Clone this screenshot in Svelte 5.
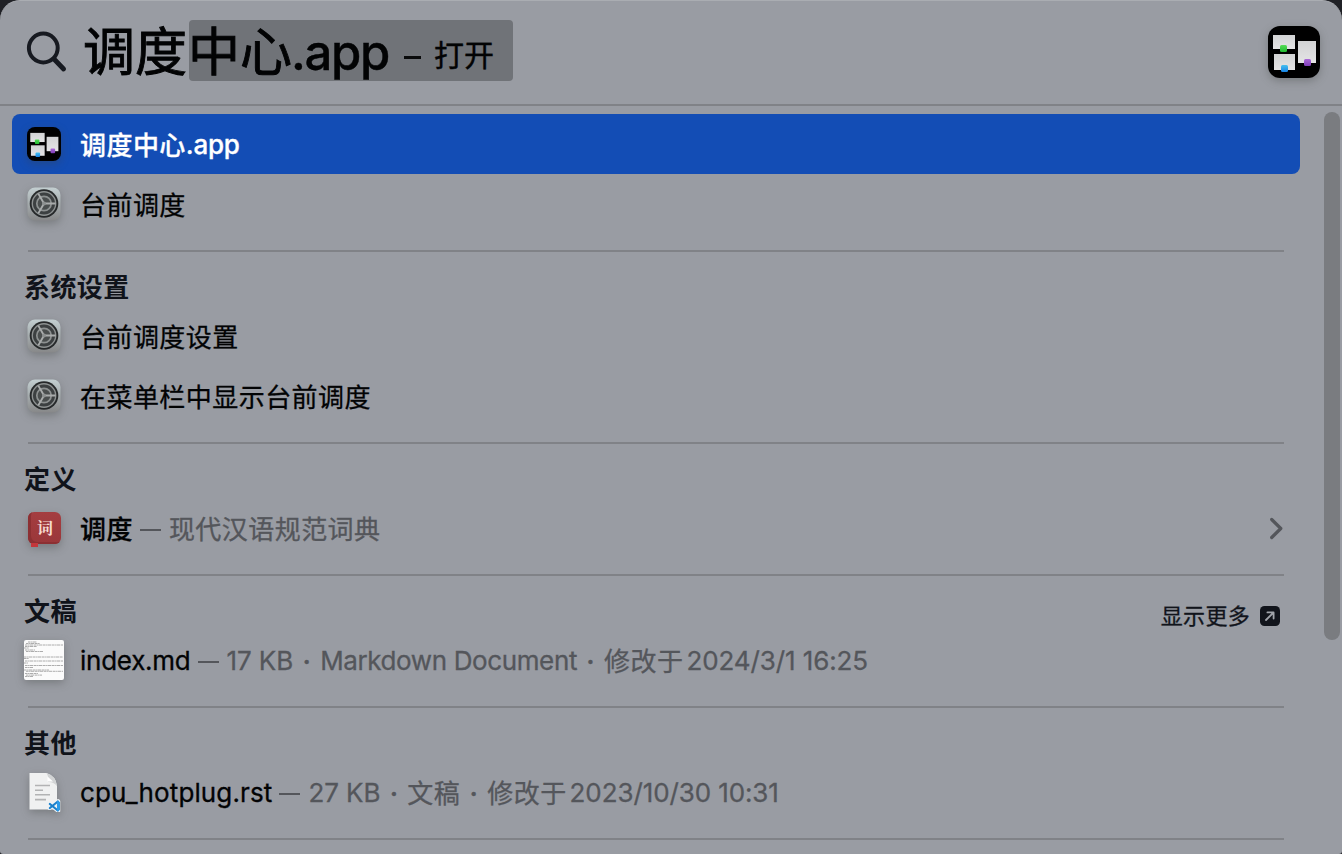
<script>
  const dot = ['·', 'dot'];
  const groups = [
    {
      rows: [
        { icon: 'mission', selected: true, name: [['调度中心', 'cjk'], ['.app', 'lat']] },
        { icon: 'gear', name: [['台前调度', 'cjk']] }
      ]
    },
    {
      title: '系统设置',
      rows: [
        { icon: 'gear', name: [['台前调度设置', 'cjk']] },
        { icon: 'gear', name: [['在菜单栏中显示台前调度', 'cjk']] }
      ]
    },
    {
      title: '定义',
      rows: [
        {
          icon: 'dict',
          strong: true,
          chevron: true,
          name: [['调度', 'cjk']],
          meta: [['现代汉语规范词典', 'cjk']]
        }
      ]
    },
    {
      title: '文稿',
      more: true,
      rows: [
        {
          icon: 'thumb',
          name: [['index.md', 'lat']],
          meta: [['17 KB', 'num'], dot, ['Markdown Document', 'tight'], dot, ['修改于', 'cjk'], ['2024/3/1 16:25', 'num date']]
        }
      ]
    },
    {
      title: '其他',
      rows: [
        {
          icon: 'doc',
          name: [['cpu_hotplug.rst', 'wide']],
          meta: [['27 KB', 'num'], dot, ['文稿', 'cjk'], dot, ['修改于', 'cjk'], ['2023/10/30 10:31', 'num date']]
        }
      ]
    }
  ];
  const thumbLines = [
    [4, 1.5, 9], [2, 3, 14], [1, 4.5, 38], [1, 6, 12], [0, 7.5, 5], [1, 9.5, 10], [2, 11, 17],
    [0, 16.5, 39], [0, 18, 5], [1, 20.5, 38], [0, 22.5, 4], [1, 25, 38], [1, 27, 8],
    [0, 29.5, 25], [2, 30.8, 37], [1, 33, 13], [2, 34.6, 16], [1, 36, 8]
  ];
</script>

{#snippet mission(size)}
  <svg class="shadow" width={size} height={size} viewBox="0 0 52 52">
    <defs>
      <linearGradient id="win" x1="0" y1="0" x2="0" y2="1">
        <stop offset="0" stop-color="#d2d3d4" /><stop offset="1" stop-color="#e4e4e5" />
      </linearGradient>
      <linearGradient id="grn" x1="0" y1="0" x2="0" y2="1">
        <stop offset="0" stop-color="#55dc55" /><stop offset="1" stop-color="#21bb31" />
      </linearGradient>
      <linearGradient id="blu" x1="0" y1="0" x2="0" y2="1">
        <stop offset="0" stop-color="#45bfee" /><stop offset="1" stop-color="#1784e6" />
      </linearGradient>
      <linearGradient id="pur" x1="0" y1="0" x2="0" y2="1">
        <stop offset="0" stop-color="#a968d6" /><stop offset="1" stop-color="#7e3db9" />
      </linearGradient>
    </defs>
    <rect width="52" height="52" rx="12" fill="#000" />
    <rect x="5" y="9" width="22" height="14" fill="url(#win)" />
    <rect x="6" y="28" width="21" height="16" fill="url(#win)" />
    <rect x="30" y="15" width="18" height="22" fill="url(#win)" />
    <rect x="12" y="19" width="7" height="7" rx="1.5" fill="url(#grn)" />
    <rect x="13" y="39" width="7" height="7" rx="1.5" fill="url(#blu)" />
    <rect x="36" y="33" width="7" height="7" rx="1.5" fill="url(#pur)" />
  </svg>
{/snippet}

{#snippet parts(list)}{#each list as [text, kind]}<span class={kind}>{text}</span>{/each}{/snippet}

<div class="panel">
  <header>
    <svg class="search" width="42" height="42" viewBox="0 0 42 42" fill="none" stroke="#171a21">
      <circle cx="17.3" cy="17" r="14.4" stroke-width="4" />
      <path d="M28 28 37.600 38" stroke-width="4.800" stroke-linecap="round" />
    </svg>
    <div class="query">
      <span class="typed">调度</span><span class="completion"><span class="rest">中心</span><span class="ext">.app</span><span class="dash"></span><span class="action">打开</span></span>
    </div>
    <div class="app">{@render mission(52)}</div>
  </header>

  <main>
    <div class="list">
      {#each groups as group}
        <section>
          {#if group.title}
            <div class="head">
              <h2>{group.title}</h2>
              {#if group.more}
                <div class="more">
                  <span>显示更多</span>
                  <svg width="20" height="20" viewBox="0 0 20 20" fill="none">
                    <rect width="20" height="20" rx="4.5" fill="#11141b" />
                    <path d="M6 14 13 7M7.400 6.400h6.200v6.200" stroke="#a0a3aa" stroke-width="1.800" stroke-linecap="round" stroke-linejoin="round" />
                  </svg>
                </div>
              {/if}
            </div>
          {/if}
          {#each group.rows as row}
            <div class="row" class:selected={row.selected}>
              <div class="icon">
                {#if row.icon === 'mission'}
                  {@render mission(34)}
                {:else if row.icon === 'gear'}
                  <svg class="shadow" width="34" height="34" viewBox="0 0 34 34" fill="none">
                    <defs>
                      <linearGradient id="plate" x1="0" y1="0" x2="0" y2="1">
                        <stop offset="0" stop-color="#c3cfd1" /><stop offset="1" stop-color="#878889" />
                      </linearGradient>
                    </defs>
                    <rect x=".5" y=".5" width="33" height="33" rx="7.5" fill="url(#plate)" />
                    <circle cx="17" cy="16.500" r="14.300" fill="#26292a" />
                    <circle cx="17" cy="16.500" r="11.700" fill="#3c4041" stroke="#8d9191" stroke-width="1.400" />
                    <circle cx="17" cy="16.500" r="7.200" fill="#4a4e4e" stroke="#8d9191" stroke-width="1.700" />
                    <path d="M17 16.500h11.500M17 16.500 11.300 6.600M17 16.500 11.300 26.400" stroke="#a9acac" stroke-width="1.900" />
                    <circle cx="17" cy="16.500" r="2" fill="#8d9191" />
                  </svg>
                {:else if row.icon === 'dict'}
                  <div class="dict"><span>词</span></div>
                {:else if row.icon === 'thumb'}
                  <svg class="shadow" width="40" height="40" viewBox="0 0 40 40">
                    <rect width="40" height="40" rx="2" fill="#fbfbfb" />
                    {#each thumbLines as [x, y, w]}
                      <path d="M{x} {y + 0.5}h{w}" stroke="#999" stroke-width=".8" stroke-dasharray="2.6 .5 1.4 .4 3.5 .6" />
                    {/each}
                  </svg>
                {:else}
                  <svg class="shadow" width="34" height="40" viewBox="0 0 34 40" fill="none">
                    <path d="M2.500 1h17q9.500 3 10.500 13v23.500h-27.500z" fill="#f0f1f1" />
                    <path d="M19.500 1q2.500 4 1.500 9 5-.5 9 4-1-10-10.500-13z" fill="#d2d4d5" />
                    <path d="M20.500 4.500v5h5.500z" fill="#fff" />
                    <path d="M8 13.500h15M8 18.300h8M8 22.800h15M8 27.600h11" stroke="#b2b3b4" stroke-width="1.600" />
                    <path d="M31.300 29.300v9.400M31 29.200 22.500 36M31 38.800 22.500 32" stroke="#eef3f6" stroke-width="4" stroke-linecap="round" />
                    <path d="M30.800 29.500 22.900 36M30.800 38.500 22.900 32" stroke="#1b80cc" stroke-width="2.200" stroke-linecap="round" />
                    <path d="M30 28.800 33 30v8l-3 1.200z" fill="#2c9be8" />
                  </svg>
                {/if}
              </div>
              <div class="text">
                <span class="name" class:strong={row.strong}>{@render parts(row.name)}</span>{#if row.meta}<span class="rule"></span><span class="meta">{@render parts(row.meta)}</span>{/if}
              </div>
              {#if row.chevron}
                <svg class="chevron" width="14" height="24" viewBox="0 0 14 24" fill="none">
                  <path d="M1.700 3.500 10.800 12.500 1.700 21.500" stroke="#54565b" stroke-width="3.200" stroke-linecap="round" stroke-linejoin="round" />
                </svg>
              {/if}
            </div>
          {/each}
        </section>
      {/each}
    </div>
    <div class="scroll"><div class="thumb"></div></div>
  </main>
</div>

<style>
  :global(body) {
    background: #202126;
    overflow: hidden;
  }
  .panel {
    box-sizing: border-box;
    width: 1342px;
    height: 854px;
    overflow: hidden;
    display: flex;
    flex-direction: column;
    border-radius: 20px 20px 3px 3px;
    background: #999ca3;
    border-top: 1px solid #aaadb2;
    color: #020304;
    font-family: Inter, 'Noto Sans CJK SC', sans-serif;
    font-size: 26px;
    -webkit-text-stroke: 0.3px;
  }
  header {
    box-sizing: border-box;
    flex: none;
    height: 105px;
    border-bottom: 2px solid #808287;
    display: flex;
    align-items: flex-start;
    padding: 19px 22px 0 26px;
  }
  .search {
    flex: none;
    margin: 11px 15px 0 0;
  }
  .query {
    display: flex;
    height: 61px;
    line-height: 65px;
    font-size: 52px;
    white-space: nowrap;
    -webkit-text-stroke: 0.9px;
  }
  .typed {
    width: 106px;
  }
  .completion {
    display: flex;
    width: 324px;
    background: #707378;
    border-radius: 4px;
  }
  .rest {
    width: 102px;
    text-indent: -1px;
  }
  .ext {
    width: 100px;
    font-size: 49px;
    font-weight: 500;
    letter-spacing: -1.3px;
    -webkit-text-stroke: 0.4px;
  }
  .dash {
    width: 17px;
    height: 3px;
    margin: 36px 0 0 13px;
    background: #0a0b0c;
  }
  .action {
    font-size: 30px;
    margin-left: 13px;
    padding-top: 3px;
    -webkit-text-stroke: 0.4px;
  }
  .app {
    margin: 6px 0 0 auto;
  }
  svg {
    display: block;
  }
  .shadow {
    filter: drop-shadow(0 3px 4px rgb(60 62 60 / 0.35));
  }
  main {
    flex: 1;
    display: flex;
    min-height: 0;
  }
  .list {
    width: 1288px;
    padding: 8px 0 0 12px;
  }
  section::after {
    content: '';
    display: block;
    height: 2px;
    margin: 16px 16px 0;
    background: #808287;
  }
  .head {
    height: 54px;
    display: flex;
    justify-content: space-between;
    padding: 0 20px 0 12px;
  }
  h2 {
    margin: 16px 0 0;
    font-size: 26px;
    line-height: 40px;
    font-weight: 700;
    letter-spacing: 0.4px;
    color: #10131a;
    -webkit-text-stroke: 0;
  }
  .more {
    display: flex;
    align-items: center;
    gap: 10px;
    height: 40px;
    margin-top: 20px;
    font-size: 22px;
    letter-spacing: 0.3px;
    color: #11141b;
  }
  .more span {
    margin-top: -5px;
  }
  .row {
    height: 60px;
    display: flex;
    align-items: center;
    border-radius: 8px;
    padding: 0 16px 0 12px;
  }
  .selected {
    background: #134db5;
    color: #fff;
    font-weight: 500;
  }
  .icon {
    width: 40px;
    margin-right: 16px;
    display: grid;
    place-items: center;
  }
  .text {
    flex: 1;
    display: flex;
    align-items: center;
    line-height: 40px;
    padding-top: 3px;
    white-space: pre;
  }
  .strong {
    font-weight: 500;
  }
  .cjk {
    letter-spacing: 0.45px;
  }
  .lat,
  .tight,
  .num,
  .wide {
    vertical-align: 1px;
    line-height: 1;
  }
  .lat {
    letter-spacing: -0.25px;
  }
  .tight {
    letter-spacing: -0.38px;
  }
  .num {
    letter-spacing: -0.1px;
  }
  .wide {
    letter-spacing: 0.13px;
  }
  .date {
    margin-left: 3px;
  }
  .dot {
    display: inline-block;
    width: 27px;
    text-align: center;
    font-weight: 600;
  }
  .meta {
    color: #54565b;
  }
  .rule {
    width: 21px;
    height: 2px;
    margin: 0 8px 0 7px;
    background: #54565b;
  }
  .dict {
    position: relative;
    width: 33px;
    height: 32px;
    border-radius: 6px;
    background: linear-gradient(#a43d40, #9a373a);
    box-shadow: inset 3px -2px 0 #8c3033, 0 4px 8px rgb(60 62 60 / 0.35);
    text-align: center;
    font: 700 16px/31px 'Noto Serif CJK SC', 'Noto Sans CJK SC', serif;
    color: #f6dcd0;
    -webkit-text-stroke: 0;
  }
  .dict::after {
    content: '';
    position: absolute;
    left: 3px;
    bottom: -3px;
    width: 7px;
    height: 4px;
    background: #c4373b;
  }
  .dict span {
    padding-left: 2px;
  }
  .scroll {
    margin-left: auto;
    padding: 6px 2px 0 0;
  }
  .thumb {
    width: 16px;
    height: 528px;
    border-radius: 8px;
    background: #7a7c80;
  }
</style>
